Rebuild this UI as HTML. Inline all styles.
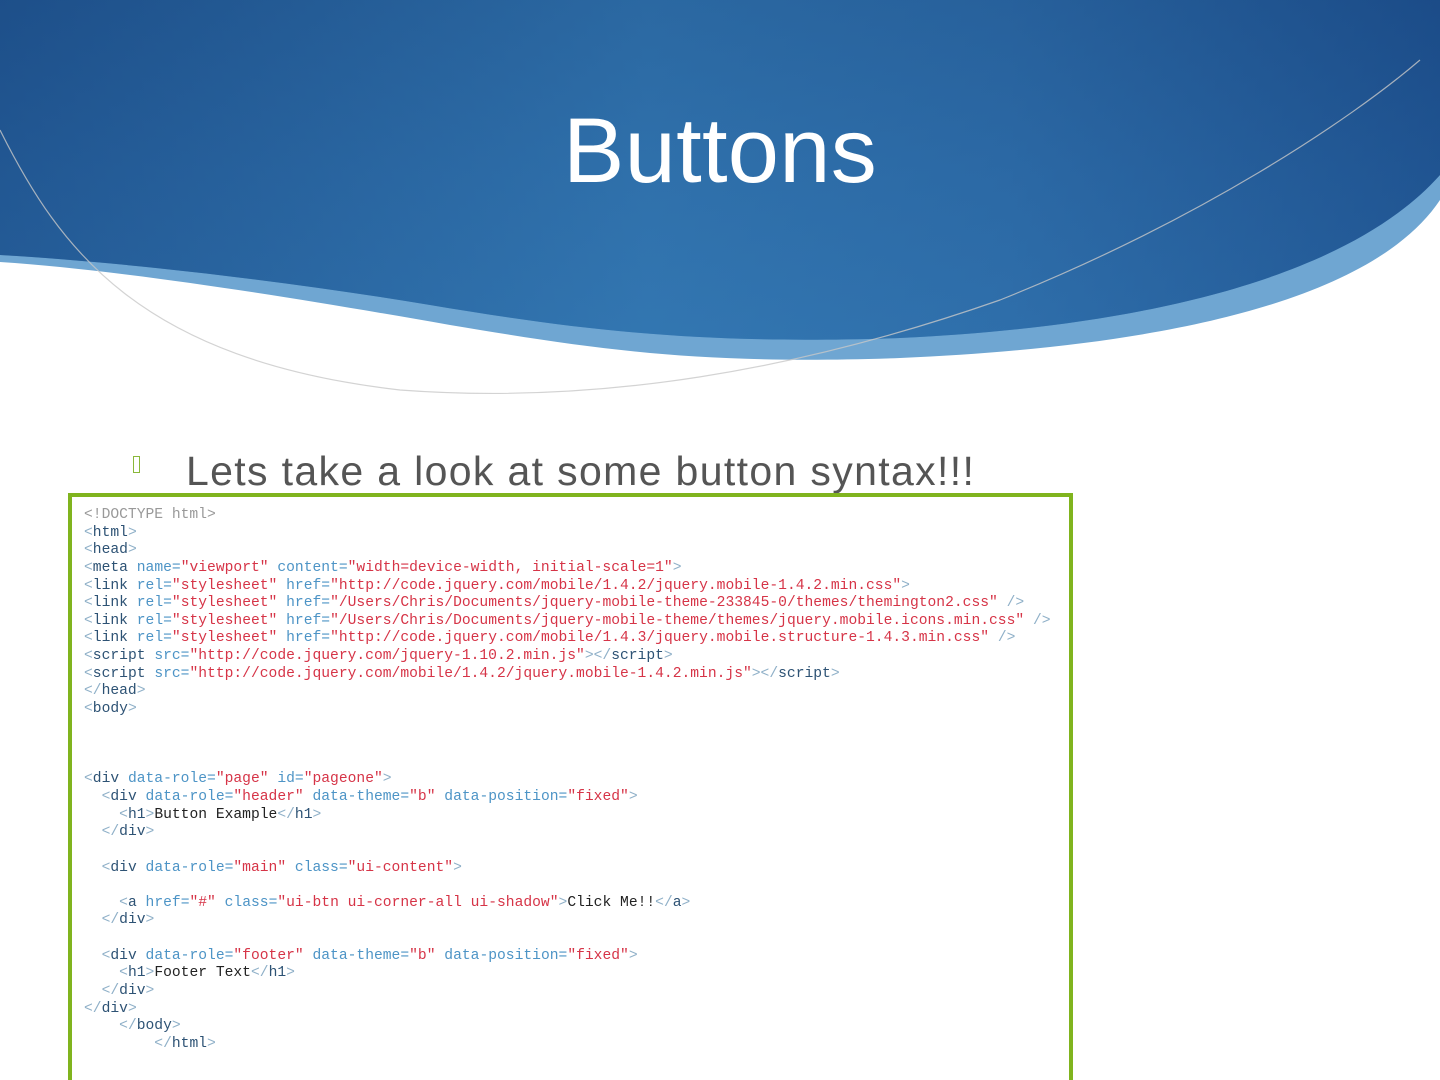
<!DOCTYPE html>
<html><head><style>
html,body{margin:0;width:1440px;height:1080px;overflow:hidden}
body{background:#fff;position:relative;font-family:"Liberation Sans",sans-serif}
svg.bg{position:absolute;left:0;top:0}
h1{position:absolute;left:0;width:1440px;top:96px;margin:0;text-align:center;font-weight:normal;color:#fff;font-size:92px;letter-spacing:0.3px;line-height:110px}
.bul{position:absolute;left:186px;top:448px;font-size:41px;color:#555;letter-spacing:1.35px;white-space:nowrap}
.mk{position:absolute;left:133px;top:456px;width:5px;height:15px;border:1.5px solid #8ab83a}
.box{position:absolute;left:68px;top:493px;width:997px;height:583px;border:4px solid #80b41e;border-bottom:none}
pre{position:absolute;left:84px;top:507px;margin:0;font-family:"Liberation Mono","DejaVu Sans Mono",monospace;font-size:14.65px;line-height:17.63px;color:#222}
.g{color:#999}.b{color:#8fb0c8}.t{color:#2d5274}.a{color:#4d94c6}.v{color:#d63447}
</style></head><body>
<svg class="bg" width="1440" height="420" viewBox="0 0 1440 420">
<defs><linearGradient id="g1" x1="0" x2="1" y1="0" y2="0">
<stop offset="0" stop-color="#1d4f8a"/><stop offset="0.45" stop-color="#3276b0"/><stop offset="0.7" stop-color="#2c6aa6"/><stop offset="1" stop-color="#1a4a88"/></linearGradient>
<linearGradient id="g2" x1="0" x2="0" y1="0" y2="1"><stop offset="0" stop-color="#1e4f88"/><stop offset="0.5" stop-color="#2a66a2"/><stop offset="1" stop-color="#3478b4"/></linearGradient></defs>
<path d="M0,0 H1440 V200 C1380,290 1200,345 900,358 C700,365 600,350 450,325 C280,295 120,270 0,262 Z" fill="#6fa6d2"/>
<path d="M0,0 H1440 V175 C1360,265 1180,325 900,338 C700,345 580,330 430,305 C280,280 120,262 0,255 Z" fill="url(#g1)"/>
<path d="M0,0 H1440 V175 C1360,265 1180,325 900,338 C700,345 580,330 430,305 C280,280 120,262 0,255 Z" fill="url(#g2)" opacity="0.35"/>
<path d="M0,130 C60,250 140,360 400,390 C600,405 800,370 1000,300 C1200,220 1350,120 1420,60" fill="none" stroke="#c8c8c8" stroke-width="1.2" opacity="0.8"/>
</svg>
<h1>Buttons</h1>
<div class="mk"></div>
<div class="bul">Lets take a look at some button syntax!!!</div>
<div class="box"></div>
<pre><span class="g">&lt;!DOCTYPE html&gt;</span>
<span class="b">&lt;</span><span class="t">html</span><span class="b">&gt;</span>
<span class="b">&lt;</span><span class="t">head</span><span class="b">&gt;</span>
<span class="b">&lt;</span><span class="t">meta</span> <span class="a">name=</span><span class="v">"viewport"</span> <span class="a">content=</span><span class="v">"width=device-width, initial-scale=1"</span><span class="b">&gt;</span>
<span class="b">&lt;</span><span class="t">link</span> <span class="a">rel=</span><span class="v">"stylesheet"</span> <span class="a">href=</span><span class="v">"http://code.jquery.com/mobile/1.4.2/jquery.mobile-1.4.2.min.css"</span><span class="b">&gt;</span>
<span class="b">&lt;</span><span class="t">link</span> <span class="a">rel=</span><span class="v">"stylesheet"</span> <span class="a">href=</span><span class="v">"/Users/Chris/Documents/jquery-mobile-theme-233845-0/themes/themington2.css"</span> <span class="b">/&gt;</span>
<span class="b">&lt;</span><span class="t">link</span> <span class="a">rel=</span><span class="v">"stylesheet"</span> <span class="a">href=</span><span class="v">"/Users/Chris/Documents/jquery-mobile-theme/themes/jquery.mobile.icons.min.css"</span> <span class="b">/&gt;</span>
<span class="b">&lt;</span><span class="t">link</span> <span class="a">rel=</span><span class="v">"stylesheet"</span> <span class="a">href=</span><span class="v">"http://code.jquery.com/mobile/1.4.3/jquery.mobile.structure-1.4.3.min.css"</span> <span class="b">/&gt;</span>
<span class="b">&lt;</span><span class="t">script</span> <span class="a">src=</span><span class="v">"http://code.jquery.com/jquery-1.10.2.min.js"</span><span class="b">&gt;&lt;/</span><span class="t">script</span><span class="b">&gt;</span>
<span class="b">&lt;</span><span class="t">script</span> <span class="a">src=</span><span class="v">"http://code.jquery.com/mobile/1.4.2/jquery.mobile-1.4.2.min.js"</span><span class="b">&gt;&lt;/</span><span class="t">script</span><span class="b">&gt;</span>
<span class="b">&lt;/</span><span class="t">head</span><span class="b">&gt;</span>
<span class="b">&lt;</span><span class="t">body</span><span class="b">&gt;</span>



<span class="b">&lt;</span><span class="t">div</span> <span class="a">data-role=</span><span class="v">"page"</span> <span class="a">id=</span><span class="v">"pageone"</span><span class="b">&gt;</span>
  <span class="b">&lt;</span><span class="t">div</span> <span class="a">data-role=</span><span class="v">"header"</span> <span class="a">data-theme=</span><span class="v">"b"</span> <span class="a">data-position=</span><span class="v">"fixed"</span><span class="b">&gt;</span>
    <span class="b">&lt;</span><span class="t">h1</span><span class="b">&gt;</span>Button Example<span class="b">&lt;/</span><span class="t">h1</span><span class="b">&gt;</span>
  <span class="b">&lt;/</span><span class="t">div</span><span class="b">&gt;</span>

  <span class="b">&lt;</span><span class="t">div</span> <span class="a">data-role=</span><span class="v">"main"</span> <span class="a">class=</span><span class="v">"ui-content"</span><span class="b">&gt;</span>

    <span class="b">&lt;</span><span class="t">a</span> <span class="a">href=</span><span class="v">"#"</span> <span class="a">class=</span><span class="v">"ui-btn ui-corner-all ui-shadow"</span><span class="b">&gt;</span>Click Me!!<span class="b">&lt;/</span><span class="t">a</span><span class="b">&gt;</span>
  <span class="b">&lt;/</span><span class="t">div</span><span class="b">&gt;</span>

  <span class="b">&lt;</span><span class="t">div</span> <span class="a">data-role=</span><span class="v">"footer"</span> <span class="a">data-theme=</span><span class="v">"b"</span> <span class="a">data-position=</span><span class="v">"fixed"</span><span class="b">&gt;</span>
    <span class="b">&lt;</span><span class="t">h1</span><span class="b">&gt;</span>Footer Text<span class="b">&lt;/</span><span class="t">h1</span><span class="b">&gt;</span>
  <span class="b">&lt;/</span><span class="t">div</span><span class="b">&gt;</span>
<span class="b">&lt;/</span><span class="t">div</span><span class="b">&gt;</span>
    <span class="b">&lt;/</span><span class="t">body</span><span class="b">&gt;</span>
        <span class="b">&lt;/</span><span class="t">html</span><span class="b">&gt;</span></pre>
</body></html>
